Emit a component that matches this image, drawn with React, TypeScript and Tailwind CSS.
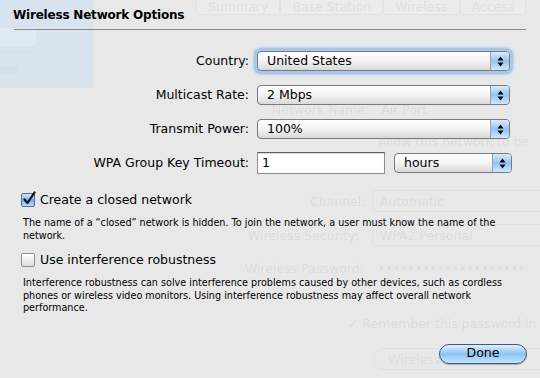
import clsx from "clsx"

const sans = "font-['DejaVu_Sans','Liberation_Sans',sans-serif]"

function Arrows() {
  return (
    <svg width="7" height="11" viewBox="0 0 7 11" className="text-black">
      <path d="M3.5 0.5 L6.5 4.5 L0.5 4.5 Z" fill="currentColor" />
      <path d="M3.5 10.5 L6.5 6.5 L0.5 6.5 Z" fill="currentColor" />
    </svg>
  )
}

function Popup({ value, className, focused }: { value: string; className: string; focused?: boolean }) {
  return (
    <div
      className={clsx(
        "flex h-[20px] items-stretch rounded-[4px] border border-[#7a7a7a] bg-gradient-to-b from-white via-[#f3f3f3] to-[#d9d9d9]",
        focused && "shadow-[0_0_0_2px_#a7c8ec,0_0_3px_3px_#88b4e2]",
        className,
      )}
    >
      <div className="flex flex-1 items-center pl-[9px] text-[12.5px] leading-none text-black">{value}</div>
      <div className="flex w-[19px] items-center justify-center rounded-r-[3px] border-l border-[#8aa2bd] bg-gradient-to-b from-[#dcebfb] via-[#93c3f1] to-[#cfe7ff]">
        <Arrows />
      </div>
    </div>
  )
}

function Checkbox({ checked }: { checked?: boolean }) {
  return (
    <div
      className={clsx(
        "relative h-[14px] w-[14px] rounded-[2px] border",
        checked
          ? "border-[#4f6f96] bg-gradient-to-b from-[#d3e6f9] via-[#78b0e8] to-[#b5dafd]"
          : "border-[#8d8d8d] bg-gradient-to-b from-white to-[#dedede]",
      )}
    >
      {checked && (
        <svg width="15" height="15" viewBox="0 0 15 15" className="absolute left-[0px] top-[-3px]">
          <path d="M2.5 8.5 L5.5 12 L12.5 1.5" stroke="#111" strokeWidth="2.2" fill="none" strokeLinecap="round" strokeLinejoin="round" />
        </svg>
      )}
    </div>
  )
}

function Row({ label, children }: { label: string; children: React.ReactNode }) {
  return (
    <div className="flex h-[20px] items-center">
      <div className="w-[250px] pr-[1px] text-right text-[12.5px] text-black">{label}</div>
      <div className="ml-[7px] flex items-center">{children}</div>
    </div>
  )
}

// the main window showing faintly through the sheet
function Ghost() {
  const g = "absolute whitespace-nowrap text-[12.5px] text-[#dcdcdc]"
  return (
    <div className="pointer-events-none absolute inset-0 blur-[0.5px]">
      <div className="absolute left-0 top-0 h-[88px] w-[93px] bg-[#d7e4ee]">
        <div className="absolute left-0 top-[28px] h-[18px] w-[36px] rounded-r-[3px] bg-[#deeaf2]" />
        <div className="absolute left-0 top-[52px] h-px w-[36px] bg-[#d0dee8]" />
        <div className="absolute left-0 top-[66px] h-[8px] w-[18px] bg-[#d2e0ea]" />
      </div>
      <div className="absolute left-[196px] top-0 flex">
        {["Summary", "Base Station", "Wireless", "Access"].map((t) => (
          <div key={t} className="whitespace-nowrap rounded-b-[3px] border border-t-0 border-[#e2e2e2] bg-[#ebebeb] px-[11px] pb-[1px] text-[12.5px] leading-[13px] text-[#dedede]">
            {t}
          </div>
        ))}
      </div>
      <div className={clsx(g, "left-[272px] top-[101px]")}>Network Name:&nbsp;&nbsp;&nbsp;Air Port</div>
      <div className={clsx(g, "left-[378px] top-[133px]")}>Allow this network to be</div>
      <div className={clsx(g, "left-[310px] top-[193px]")}>Channel:</div>
      <div className="absolute left-[372px] top-[190px] h-[22px] w-[180px] rounded-[3px] border border-[#e0e0e0]" />
      <div className={clsx(g, "left-[380px] top-[193px]")}>Automatic</div>
      <div className={clsx(g, "left-[248px] top-[227px]")}>Wireless Security:</div>
      <div className="absolute left-[372px] top-[224px] h-[22px] w-[180px] rounded-[3px] border border-[#e0e0e0]" />
      <div className={clsx(g, "left-[380px] top-[227px]")}>WPA2 Personal</div>
      <div className={clsx(g, "left-[245px] top-[260px]")}>Wireless Password:</div>
      <div className={clsx(g, "left-[378px] top-[260px]")}>••••••••••••••••••••</div>
      <div className={clsx(g, "left-[348px] top-[315px]")}>✓ Remember this password in</div>
      <div className="absolute left-[373px] top-[348px] h-[22px] w-[180px] rounded-full border border-[#e0e0e0]" />
      <div className={clsx(g, "left-[388px] top-[351px]")}>Wireless</div>
    </div>
  )
}

export default function App() {
  return (
    <div className={clsx("relative h-[378px] w-[540px] overflow-hidden bg-[#e8e8e8]", sans)}>
      <Ghost />
      <div className="relative flex flex-col">
        <div className="px-[13px] pt-[7px] text-[12px] font-bold leading-[16px] tracking-[-0.2px] text-black">Wireless Network Options</div>
        <div className="mx-[14px] mt-[6px] h-px bg-[#8c8c8c]" />

        <div className="mt-[21px] flex flex-col gap-[14px]">
          <Row label="Country:">
            <Popup value="United States" className="w-[253px]" focused />
          </Row>
          <Row label="Multicast Rate:">
            <Popup value="2 Mbps" className="w-[253px]" />
          </Row>
          <Row label="Transmit Power:">
            <Popup value="100%" className="w-[253px]" />
          </Row>
          <Row label="WPA Group Key Timeout:">
            <div className="flex h-[22px] w-[128px] items-center border border-[#8e8e8e] border-t-[#5f5f5f] bg-white pl-[4px] text-[12.5px] shadow-[inset_0_1px_1px_rgba(0,0,0,0.15)]">
              1
            </div>
            <Popup value="hours" className="ml-[9px] w-[118px]" />
          </Row>
        </div>

        <div className="ml-[21px] mt-[19px] flex h-[16px] items-center gap-[5px] text-[12.5px] text-black">
          <Checkbox checked />
          <span>Create a closed network</span>
        </div>
        <p className="ml-[23px] mt-[9px] whitespace-nowrap text-[9.65px] leading-[12.5px] text-black">
          The name of a “closed” network is hidden. To join the network, a user must know the name of the
          <br />
          network.
        </p>

        <div className="ml-[21px] mt-[10px] flex h-[16px] items-center gap-[5px] text-[12.5px] text-black">
          <Checkbox />
          <span>Use interference robustness</span>
        </div>
        <p className="ml-[23px] mt-[9px] whitespace-nowrap text-[9.65px] leading-[12.5px] text-black">
          Interference robustness can solve interference problems caused by other devices, such as cordless
          <br />
          phones or wireless video monitors. Using interference robustness may affect overall network
          <br />
          performance.
        </p>

        <div className="mr-[13px] mt-[29px] flex justify-end">
          <button className="flex h-[20px] w-[88px] items-center justify-center rounded-full border border-[#3b5b8c] bg-gradient-to-b from-[#e0effd] via-[#8cc3f3] to-[#c4e5ff] text-[12.5px] text-black shadow-[0_1px_1px_rgba(0,0,0,0.25)]">
            Done
          </button>
        </div>
      </div>
    </div>
  )
}
